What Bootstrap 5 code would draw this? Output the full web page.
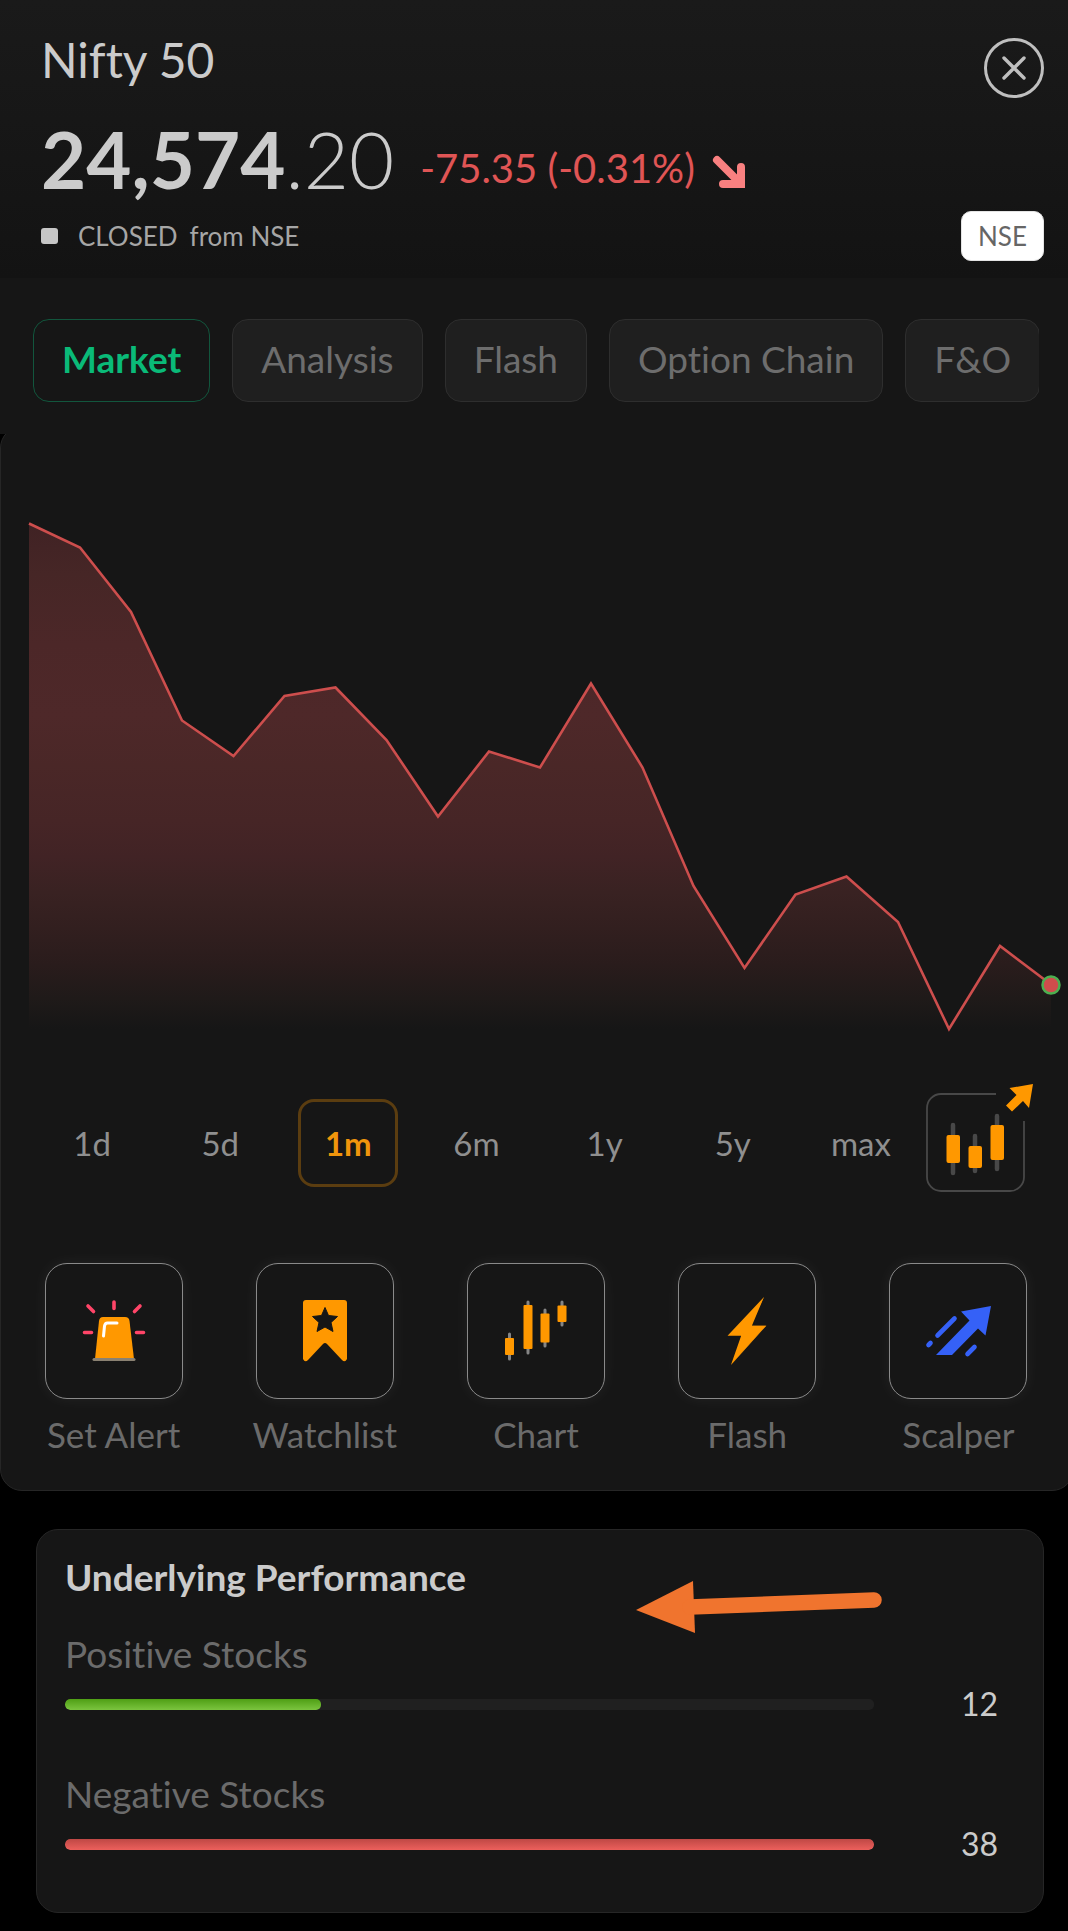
<!DOCTYPE html>
<html lang="en" data-bs-theme="dark">
<head>
<meta charset="utf-8">
<meta name="viewport" content="width=device-width, initial-scale=1">
<title>Nifty 50</title>
<link href="https://cdn.jsdelivr.net/npm/bootstrap@5.3.0/dist/css/bootstrap.min.css" rel="stylesheet">
<style>
  body { background: #000; color: #cbcbcb; font-family: Lato, "Open Sans", sans-serif; overflow-x: hidden; }
  body, button { font-variant-ligatures: none; }
  svg { display: block; flex: none; }
  .quote-head { background: linear-gradient(#1a1a1a, #131313); padding: 30px 24px 17px 41px; }
  .quote-name { font-size: 48px; line-height: 60px; margin: 0; font-weight: 400; color: #cbcbcb; }
  .round-close { width: 60px; height: 60px; margin-top: 8px; }
  .quote-row { margin-top: 19px; }
  .quote-price { font-size: 78px; line-height: 84px; font-weight: 700; }
  .quote-price span { font-weight: 300; }
  .quote-change { font-size: 40px; line-height: 50px; color: #e05555; margin-left: 26px; }
  .trend-arrow { margin-bottom: 12px; }
  .status-row { margin-top: 10px; }
  .status-text { font-size: 26px; line-height: 50px; color: #a6a6a6; }
  .status-square { width: 17px; height: 16px; border-radius: 3px; background: #c6c6c6; }
  .exchange { font-size: 26px; line-height: 48px; padding: 0 16px; background: #fff; color: #666; border: 1px solid #e4e4e4; border-radius: 10px; }
  .tab-band { background: #161616; padding: 41px 29px 32px 33px; z-index: 2; }
  .tab-strip { gap: 22px; }
  .tab-pill { height: 83px; padding: 0 28px 4px; font-size: 37px; line-height: 44px; color: #6d6d6d; background: #1f1f1f; border: 1px solid #2e2e2e; border-radius: 16px; }
  .tab-pill.active { color: #0aba78; background: #161616; border-color: #12563d; font-weight: 700; }
  .chart-panel { background: #161616; border: 1px solid #262626; border-radius: 22px; margin: -8px -6px 0 0; padding: 8px 0 34px; }
  .range-row { padding: 23px 36px 0 27px; }
  .range-btn { height: 88px; width: 100px; font-size: 33px; line-height: 40px; color: #8f8f8f; background: none; border: 3px solid transparent; border-radius: 16px; padding: 0; }
  .range-btn.active { color: #f0950c; border-color: #5b3d10; font-weight: 700; }
  .action-row { padding: 58px 9px 0 7px; }
  .action-link { color: #6b6b6b; font-size: 35px; line-height: 44px; gap: 13px; }
  .action-tile { width: 138px; height: 136px; border: 1px solid #8a8a8a; border-radius: 22px; box-shadow: 0 0 16px rgba(255,255,255,.06); }
  .perf-card { margin: 38px 24px 17px 36px; padding: 25px 45px 48px 28px; background: #161616; border: 1px solid #262626; border-radius: 22px; }
  .perf-title { font-size: 37px; line-height: 44px; font-weight: 700; margin: 0 0 33px; color: #cbcbcb; }
  .perf-label { font-size: 37px; line-height: 44px; color: #6b6b6b; margin-bottom: 8px; }
  .perf-block + .perf-block { margin-top: 48px; }
  .perf-count { width: 124px; font-size: 32px; line-height: 40px; }
  .meter { height: 11px; border-radius: 5px; background: #202020; }
  .meter .progress-bar { border-radius: 5px; }
  .bar-up { background: linear-gradient(#4f9f15, #7bc43f); }
  .bar-down { background: linear-gradient(#bf4845, #ec605c); }
  .pointer-arrow { top: 49px; right: 158px; }
</style>
</head>
<body>
<div class="overflow-hidden">
<header class="quote-head">
  <div class="d-flex justify-content-between align-items-start">
    <h1 class="quote-name">Nifty 50</h1>
    <button type="button" class="round-close btn p-0 border-0" aria-label="Close">
      <svg width="60" height="60" viewBox="0 0 60 60" fill="none" stroke="#bfbfbf" stroke-linecap="round"><circle cx="30" cy="30" r="28.5" stroke-width="3"/><path d="M20 20 40 40M40 20 20 40" stroke-width="3.4"/></svg>
    </button>
  </div>
  <div class="quote-row d-flex align-items-end">
    <div class="quote-price">24,574<span>.20</span></div>
    <div class="quote-change mb-2">-75.35 (-0.31%)</div>
    <svg class="trend-arrow ms-3" width="36" height="34" viewBox="0 0 36 34" fill="none" stroke="#f98080" stroke-width="8" stroke-linecap="round"><path d="M6 5 29 28M30 12V29M12 29H30"/><path d="M26 25h8v8h-8z" fill="#f98080" stroke="none"/></svg>
  </div>
  <div class="status-row d-flex align-items-center justify-content-between">
    <div class="d-flex align-items-center status-text">
      <span class="status-square me-3"></span><span class="ms-1 me-2 pe-1">CLOSED</span><span>from NSE</span>
    </div>
    <span class="exchange">NSE</span>
  </div>
</header>

<nav class="tab-band position-relative">
  <div class="tab-strip d-flex flex-nowrap overflow-hidden">
    <button type="button" class="tab-pill flex-shrink-0 active">Market</button>
    <button type="button" class="tab-pill flex-shrink-0">Analysis</button>
    <button type="button" class="tab-pill flex-shrink-0">Flash</button>
    <button type="button" class="tab-pill flex-shrink-0">Option Chain</button>
    <button type="button" class="tab-pill flex-shrink-0">F&amp;O</button>
  </div>
</nav>

<main>
<section class="chart-panel">
  <svg class="w-100" viewBox="1 435 1072 623" role="img" aria-label="Price over one month">
    <defs><linearGradient id="fade" gradientUnits="userSpaceOnUse" x1="0" y1="523" x2="0" y2="1029">
      <stop offset="0" stop-color="#402224"/><stop offset=".1" stop-color="#462626"/><stop offset=".24" stop-color="#4c2728"/><stop offset=".38" stop-color="#4e2829"/><stop offset=".48" stop-color="#4a2727"/><stop offset=".59" stop-color="#462526"/><stop offset=".66" stop-color="#412325"/><stop offset=".73" stop-color="#392222"/><stop offset=".8" stop-color="#321f1f"/><stop offset=".87" stop-color="#2a1c1c"/><stop offset=".94" stop-color="#1f1a19"/><stop offset="1" stop-color="#161616"/>
    </linearGradient></defs>
    <path fill="url(#fade)" d="M29 523.500 80 547.500 131 612 182 720.500 233.500 756 284.500 696 335.500 687.500 386.500 740 438 816.500 489 751.500 540 767.500 591 683.500 642.500 767.500 693.500 886 744.500 968 795.500 894.500 846.500 876.500 898 922 949 1029 1000 946 1051 984.500V1029H29Z"/>
    <path fill="none" stroke="#cd4e4d" stroke-width="2.600" d="M29 523.500 80 547.500 131 612 182 720.500 233.500 756 284.500 696 335.500 687.500 386.500 740 438 816.500 489 751.500 540 767.500 591 683.500 642.500 767.500 693.500 886 744.500 968 795.500 894.500 846.500 876.500 898 922 949 1029 1000 946 1051 984.500"/>
    <circle cx="1051" cy="985" r="8.500" fill="#d04d4c" stroke="#4caf50" stroke-width="2.500"/>
  </svg>

  <div class="range-row d-flex align-items-center">
    <div class="d-flex flex-grow-1">
      <div class="flex-fill w-100 text-center"><button type="button" class="range-btn">1d</button></div>
      <div class="flex-fill w-100 text-center"><button type="button" class="range-btn">5d</button></div>
      <div class="flex-fill w-100 text-center"><button type="button" class="range-btn active">1m</button></div>
      <div class="flex-fill w-100 text-center"><button type="button" class="range-btn">6m</button></div>
      <div class="flex-fill w-100 text-center"><button type="button" class="range-btn">1y</button></div>
      <div class="flex-fill w-100 text-center"><button type="button" class="range-btn">5y</button></div>
      <div class="flex-fill w-100 text-center"><button type="button" class="range-btn">max</button></div>
    </div>
    <a href="#" aria-label="Open full chart">
      <svg width="112" height="124" viewBox="925 1081 112 124">
        <path d="M996 1094H941a14 14 0 0 0-14 14V1177a14 14 0 0 0 14 14H1010a14 14 0 0 0 14-14V1121" fill="none" stroke="#484848" stroke-width="1.800"/>
        <path d="M953 1125V1173M975 1136V1171M997 1116V1169" stroke="#484848" stroke-width="4.500" stroke-linecap="round"/>
        <g fill="#ff9800"><rect x="946.500" y="1135" width="13.500" height="28" rx="2"/><rect x="968.500" y="1146" width="13.500" height="22" rx="2"/><rect x="990.500" y="1125" width="13.500" height="35" rx="2"/><path d="M1033 1084 1009.500 1088 1016.500 1095 1006 1105.500 1012 1111.500 1023 1101 1029 1108Z"/></g>
      </svg>
    </a>
  </div>

  <div class="action-row d-flex">
    <a href="#" class="action-link w-100 d-flex flex-column align-items-center text-decoration-none">
      <span class="action-tile d-flex align-items-center justify-content-center">
        <svg width="66" height="62" viewBox="1 1 66 62"><path d="M15 60 19 22q.500-4 4-4H45q4 0 4.500 4L54 60Z" fill="#ff9800"/><path d="M14 60.500H54" stroke="#8a8172" stroke-width="3" stroke-linecap="round"/><path d="M23.500 37 24.500 27q.500-3 3-3H37" fill="none" stroke="#fff" stroke-width="3" stroke-linecap="round"/><path d="M34 3V9.500M8 7 13.500 12.500M60 7 54.500 12.500M4.500 33.500H11.500M56.500 33.500H63.500" stroke="#ff4568" stroke-width="3.600" stroke-linecap="round"/></svg>
      </span>Set Alert</a>
    <a href="#" class="action-link w-100 d-flex flex-column align-items-center text-decoration-none">
      <span class="action-tile d-flex align-items-center justify-content-center">
        <svg width="46" height="64" viewBox="0 0 46 64"><path d="M4 1H42a3 3 0 0 1 3 3V60q-2 4-5 1L25 45q-2-2-4 0L6 61q-3 3-5-1V4a3 3 0 0 1 3-3Z" fill="#ff9800"/><path d="M23 8.500 26.500 16.500 35.500 17.500 29 23.500 31 32.500 23 28 15 32.500 17 23.500 10.500 17.500 19.500 16.500Z" fill="#161616" stroke="#161616" stroke-linejoin="round"/></svg>
      </span>Watchlist</a>
    <a href="#" class="action-link w-100 d-flex flex-column align-items-center text-decoration-none">
      <span class="action-tile d-flex align-items-center justify-content-center">
        <svg width="64" height="62" viewBox="1 1 64 62"><path d="M6.500 35V60M25 3V54M42 11V47M59 3V26" stroke="#858585" stroke-width="3" stroke-linecap="round"/><g fill="#ff9800"><rect x="2" y="39" width="9" height="17" rx="1"/><rect x="20.500" y="6" width="9" height="44" rx="1"/><rect x="37.500" y="14.500" width="9" height="29" rx="1"/><rect x="54.500" y="6.500" width="9" height="16.500" rx="1"/></g></svg>
      </span>Chart</a>
    <a href="#" class="action-link w-100 d-flex flex-column align-items-center text-decoration-none">
      <span class="action-tile d-flex align-items-center justify-content-center">
        <svg width="42" height="72" viewBox="0 0 42 74"><path d="M38.500 2 24 31.500H41L4 72.500 38 33.500H20Z" fill="#d98613"/><path d="M38.500 2 26 31.500H40.500L4.500 72 15 42H1Z" fill="#ff9800"/></svg>
      </span>Flash</a>
    <a href="#" class="action-link w-100 d-flex flex-column align-items-center text-decoration-none">
      <span class="action-tile d-flex align-items-center justify-content-center">
        <svg width="68" height="54" viewBox="0 0 68 54"><path d="M67 2 37 7.500 45.500 16.500 12 51H28L54 24.500 61.500 31.500Z" fill="#3561f7"/><path d="M13.500 31.500 30.500 14.500M4.500 41 6.500 39M43.500 50 50.500 43" stroke="#3561f7" stroke-width="4.600" stroke-linecap="round"/></svg>
      </span>Scalper</a>
  </div>
</section>

<section class="perf-card position-relative">
  <h2 class="perf-title">Underlying Performance</h2>
  <div class="perf-block">
    <div class="perf-label">Positive Stocks</div>
    <div class="d-flex align-items-center">
      <div class="meter progress flex-grow-1" role="progressbar" aria-label="Positive stocks" aria-valuenow="12" aria-valuemin="0" aria-valuemax="38"><div class="progress-bar bar-up" style="width: 31.6%"></div></div>
      <div class="perf-count text-end">12</div>
    </div>
  </div>
  <div class="perf-block">
    <div class="perf-label">Negative Stocks</div>
    <div class="d-flex align-items-center">
      <div class="meter progress flex-grow-1" role="progressbar" aria-label="Negative stocks" aria-valuenow="38" aria-valuemin="0" aria-valuemax="38"><div class="progress-bar bar-down" style="width: 100%"></div></div>
      <div class="perf-count text-end">38</div>
    </div>
  </div>
  <svg class="pointer-arrow position-absolute" width="250" height="56" viewBox="0 0 250 56" aria-hidden="true"><path d="M1 31 58 2 60 54Z" fill="#f0742e"/><path d="M55 28 239 21" stroke="#f0742e" stroke-width="15.500" stroke-linecap="round"/></svg>
</section>
</main>
</div>
<script src="https://cdn.jsdelivr.net/npm/bootstrap@5.3.0/dist/js/bootstrap.bundle.min.js"></script>
</body>
</html>
